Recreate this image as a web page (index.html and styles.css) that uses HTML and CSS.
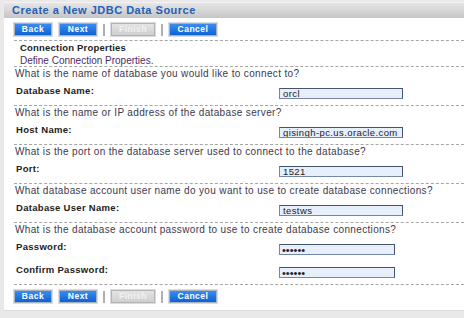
FILE: index.html
```html
<!DOCTYPE html>
<html lang="en">

<head>
    <meta charset="UTF-8">
    <title>Create a New JDBC Data Source</title>
    <link rel="stylesheet" href="styles.css">
</head>

<body>
    <div class="frame">
        <h1 class="titlebar">Create a New JDBC Data Source</h1>
        <div class="panel">
            <div class="buttons">
                <button class="btn">Back</button>
                <button class="btn">Next</button>
                <span class="bar"></span>
                <button class="btn off" disabled>Finish</button>
                <span class="bar"></span>
                <button class="btn">Cancel</button>
            </div>

            <div class="block head">
                <h2 class="heading">Connection Properties</h2>
                <p class="intro">Define Connection Properties.</p>
            </div>

            <div class="block">
                <p class="question">What is the name of database you would like to connect to?</p>
                <div class="row">
                    <label class="label" for="dbName">Database Name:</label>
                    <input class="field" id="dbName" type="text" value="orcl">
                </div>
            </div>

            <div class="block">
                <p class="question">What is the name or IP address of the database server?</p>
                <div class="row">
                    <label class="label" for="host">Host Name:</label>
                    <input class="field" id="host" type="text" value="gisingh-pc.us.oracle.com">
                </div>
            </div>

            <div class="block">
                <p class="question">What is the port on the database server used to connect to the database?</p>
                <div class="row">
                    <label class="label" for="port">Port:</label>
                    <input class="field" id="port" type="text" value="1521">
                </div>
            </div>

            <div class="block">
                <p class="question">What database account user name do you want to use to create database connections?</p>
                <div class="row">
                    <label class="label" for="user">Database User Name:</label>
                    <input class="field" id="user" type="text" value="testws">
                </div>
            </div>

            <div class="block">
                <p class="question">What is the database account password to use to create database connections?</p>
                <div class="row">
                    <label class="label" for="pass">Password:</label>
                    <input class="field short" id="pass" type="password" value="secret">
                </div>
                <div class="row">
                    <label class="label" for="pass2">Confirm Password:</label>
                    <input class="field short" id="pass2" type="password" value="secret">
                </div>
            </div>

            <div class="block buttons bottom">
                <button class="btn">Back</button>
                <button class="btn">Next</button>
                <span class="bar"></span>
                <button class="btn off" disabled>Finish</button>
                <span class="bar"></span>
                <button class="btn">Cancel</button>
            </div>
        </div>
    </div>
</body>

</html>
```

FILE: styles.css
```css
/* JDBC data source wizard */
body {
    margin: 0;
    background: #e9e9e9;
    font-family: "Liberation Sans", Arial, sans-serif;
    color: #222;
}

.frame {
    padding: 2px 0 0 4px;
    height: 316px;
    overflow: hidden;
}

.titlebar {
    margin: 0;
    height: 15px;
    padding-left: 8px;
    background: linear-gradient(#e6e6e6, #c6c6c6);
    border-top: 1px solid #f4f4f4;
    font-size: 11px;
    line-height: 14px;
    letter-spacing: 0.5px;
    font-weight: bold;
    color: #2360b8;
}

.panel {
    background: #fff;
    padding-left: 10px;
    height: 292px;
    border-bottom: 1px solid #dcdcdc;
}

.buttons {
    display: flex;
    align-items: center;
    gap: 6px;
    padding-top: 5px;
    height: 13px;
    padding-bottom: 4px;
}

.btn {
    height: 13px;
    padding: 0;
    border: 1px solid #a9b3bf;
    background: linear-gradient(#3a8cf0, #0f62d2);
    box-shadow: 0 0 0 1px #d9dde2;
    color: #fff;
    font-family: inherit;
    font-size: 8.5px;
    font-weight: bold;
    letter-spacing: 0.5px;
    line-height: 11px;
    width: 38px;
}

.btn + .btn {
    margin-left: 1px;
}

.btn.off {
    width: 44px;
    background: linear-gradient(#e4e4e4, #cfcfcf);
    border-color: #b4b4b4;
    color: #f2f2f2;
}

.btn:last-child {
    width: 48px;
}

.bar {
    width: 2px;
    height: 12px;
    background: #b0b0b0;
}

/* dotted rule above each section */
.block {
    border-top: 1px dashed #a6a6a6;
    padding-bottom: 1px;
}

.head {
    padding-left: 6px;
    padding-bottom: 0;
}

.heading {
    margin: 0;
    font-size: 9.5px;
    line-height: 14px;
    letter-spacing: 0.2px;
}

.intro {
    margin: 0;
    font-size: 10px;
    line-height: 11px;
    color: #4b2d68;
}

.question {
    margin: 0;
    padding-left: 1px;
    font-size: 10px;
    line-height: 14px;
    letter-spacing: 0.35px;
    color: #40394d;
}

.row {
    display: flex;
    align-items: flex-start;
    height: 23px;
}

.label {
    width: 263px;
    margin-top: 4px;
    padding-left: 2px;
    font-size: 9.5px;
    font-weight: bold;
    letter-spacing: 0.3px;
    line-height: 12px;
}

.field {
    box-sizing: border-box;
    width: 124px;
    height: 11px;
    margin: 7px 0 0;
    padding: 0 3px;
    border: 1px solid #7587a6;
    border-top-color: #44546f;
    border-right-color: #44546f;
    background: #e7effb;
    font-family: inherit;
    font-size: 9.5px;
    letter-spacing: 0.4px;
    color: #222;
}

.field.short {
    width: 116px;
    padding: 0 2px;
    font-size: 11px;
    letter-spacing: 0;
    line-height: 9px;
}

.bottom {
    padding-top: 5px;
}
```
